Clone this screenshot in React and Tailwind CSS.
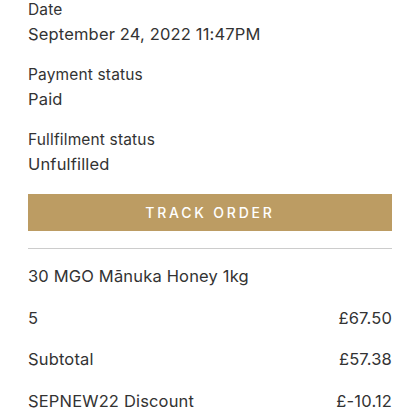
const Field = ({ label, value }) => (
  <div className="flex flex-col">
    <span className="text-[15.5px] leading-6 tracking-[0.01em]">{label}</span>
    <span className="text-[16.5px] leading-6 tracking-[0.01em]">{value}</span>
  </div>
);

const Row = ({ left, right }) => (
  <div className="flex justify-between text-[16.5px] leading-6 tracking-[0.01em]">
    <span>{left}</span>
    <span>{right}</span>
  </div>
);

export default function App() {
  return (
    <div
      className="w-[420px] h-[420px] overflow-hidden bg-white text-[#333333] px-7"
      style={{ fontFamily: 'Inter, sans-serif' }}
    >
      <div className="-mt-[2px] flex flex-col gap-[17px]">
        <Field label="Date" value="September 24, 2022 11:47PM" />
        <Field label="Payment status" value="Paid" />
        <Field label="Fullfilment status" value="Unfulfilled" />
      </div>
      <button className="mt-[18px] w-full h-[37px] bg-[#bc9c63] text-white text-[14px] font-medium tracking-[0.2em] uppercase">
        Track Order
      </button>
      <div className="mt-[17px] border-t border-[#cccccc]" />
      <div className="mt-[15px] flex flex-col gap-[17.5px]">
        <Row left="30 MGO Mānuka Honey 1kg" right="" />
        <Row left="5" right="£67.50" />
        <Row left="Subtotal" right="£57.38" />
        <Row left="SEPNEW22 Discount" right="£-10.12" />
      </div>
    </div>
  );
}
